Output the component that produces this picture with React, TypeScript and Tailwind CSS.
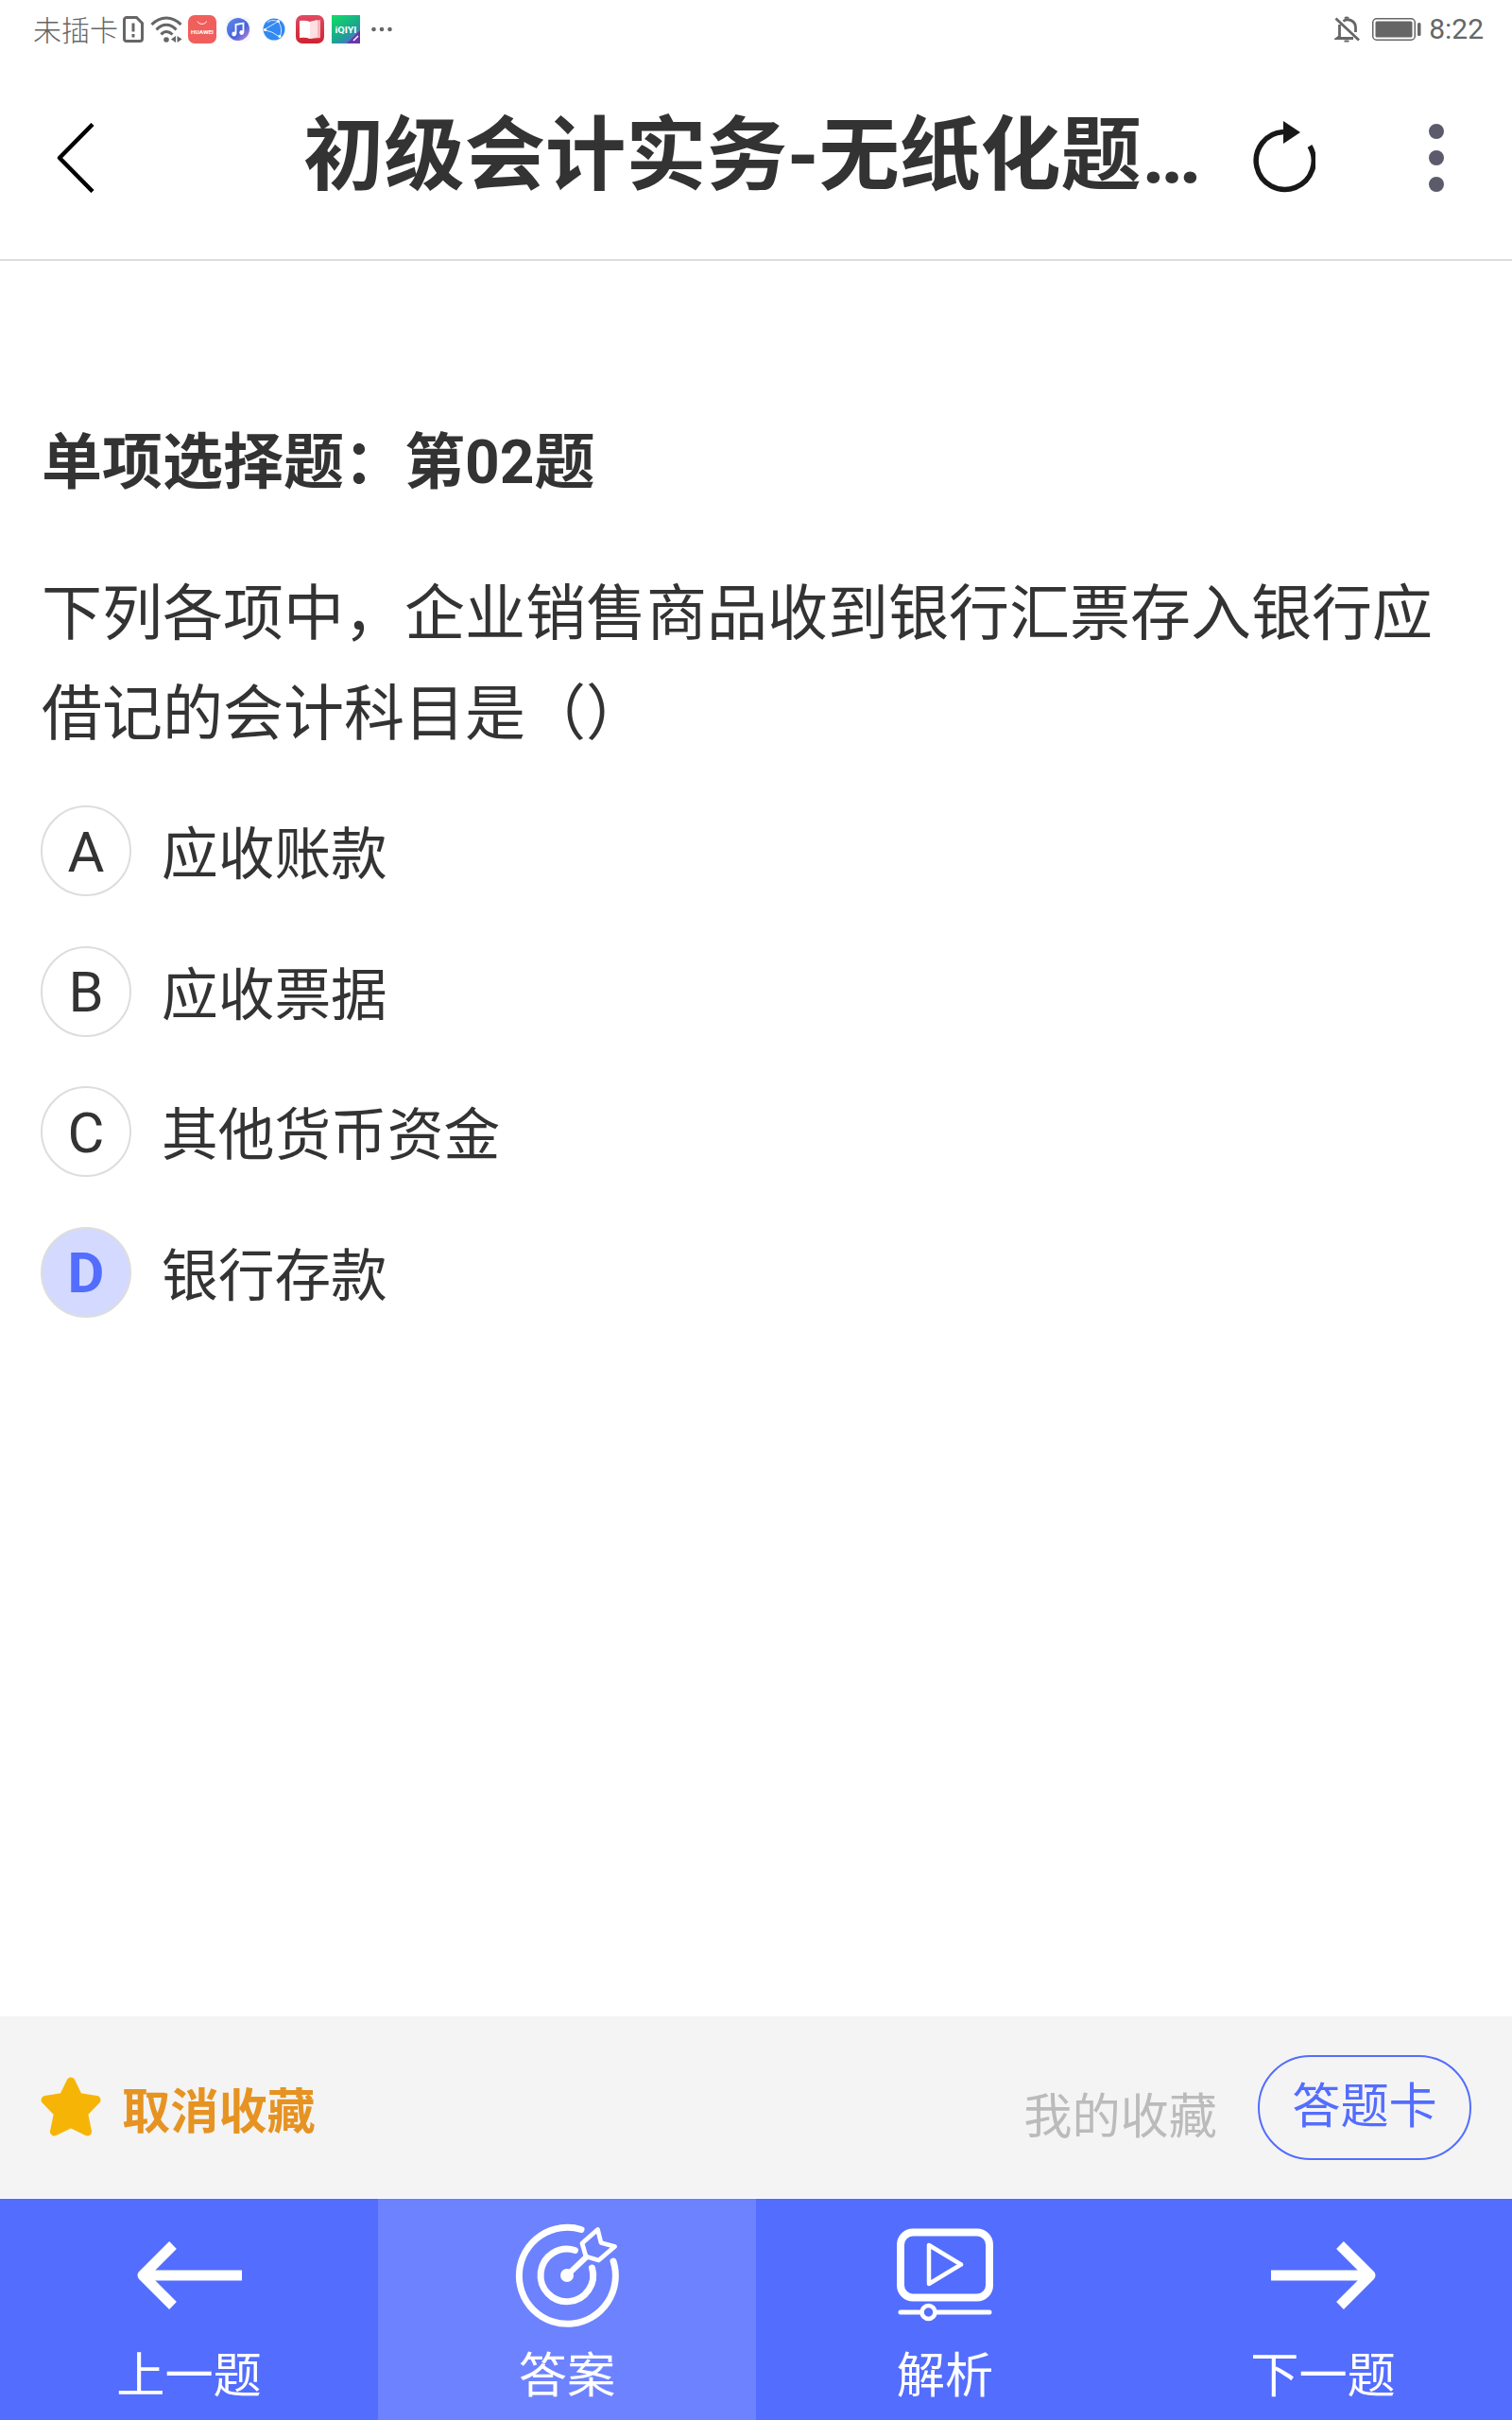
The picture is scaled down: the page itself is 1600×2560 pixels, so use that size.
const options = [
  { key: "A", text: "应收账款" },
  { key: "B", text: "应收票据" },
  { key: "C", text: "其他货币资金" },
  { key: "D", text: "银行存款", selected: true },
];

function StatusBar() {
  return (
    <div className="flex h-[62px] items-center justify-between pb-px pl-[35px] pr-[30px] text-[#666]">
      <div className="flex items-center">
        <span className="pb-0.5 font-['Noto_Sans_CJK_SC',sans-serif] text-[30px] leading-none font-light">
          未插卡
        </span>
        <svg width="22" height="28" viewBox="0 0 22 28" className="ml-[5px]" fill="none" stroke="#666" strokeWidth="3">
          <path d="M4 1.5h10.500L20.500 7.500V24a2.500 2.500 0 0 1-2.500 2.500H4A2.500 2.500 0 0 1 1.500 24V4A2.500 2.500 0 0 1 4 1.500z" />
          <path d="M11 7.500v9M11 19v3.500" />
        </svg>
        <svg width="34" height="28" viewBox="0 0 34 28" className="ml-[7px]" fill="none" stroke="#666" strokeWidth="3">
          <path d="M1.500 9C10.500-.5 23.500-.5 32.500 9M6.500 14.500c6-7 15-7 21 0M11.500 19.500c3-4 8-4 12 0" />
          <circle cx="17" cy="25" r="2.800" fill="#666" stroke="none" />
          <path d="M27 21v7l-5-3.500zM28.500 21v7l5-3.500z" fill="#666" stroke="none" />
        </svg>
        {/* Running app icons */}
        <svg width="30" height="30" viewBox="0 0 30 30" className="ml-[6px]">
          <rect width="30" height="30" rx="7" fill="#f05f5b" />
          <path d="M10 6.500c1 3.800 8.500 3.800 9.500 0" fill="none" stroke="#fff" strokeWidth="1" />
          <text x="15" y="19.500" textAnchor="middle" textLength="24" lengthAdjust="spacingAndGlyphs" fill="#fff" fontFamily="Roboto, sans-serif" fontWeight="700" fontSize="5.500">
            HUAWEI
          </text>
        </svg>
        <svg width="26" height="26" viewBox="0 0 26 26" className="ml-[10px]">
          <defs>
            <linearGradient id="music" x1="0" y1="0" x2="1" y2="1">
              <stop offset="0" stopColor="#5b8def" />
              <stop offset="0.600" stopColor="#4a62d8" />
              <stop offset="1" stopColor="#d58be0" />
            </linearGradient>
          </defs>
          <rect width="26" height="26" rx="6" fill="#f7f7fb" />
          <circle cx="13" cy="13" r="12" fill="url(#music)" />
          <path d="M10.500 18V8l8-1.500v10" fill="none" stroke="#fff" strokeWidth="1.800" />
          <circle cx="8.700" cy="18" r="2.400" fill="#fff" />
          <circle cx="16.700" cy="16.500" r="2.400" fill="#fff" />
        </svg>
        <svg width="24" height="24" viewBox="0 0 24 24" className="ml-[13px]">
          <circle cx="12" cy="12" r="11.500" fill="#3388f2" />
          <path d="M1.500 12.500 16.500 3.500q5 8 2 15.500M1.500 12.500Q10 14 18 20M16.500 3.500Q8 1 5 5" fill="none" stroke="#d5e8ff" strokeWidth="1" />
          <circle cx="16.500" cy="3.500" r="1.500" fill="#fff" />
          <circle cx="18" cy="19.500" r="1.500" fill="#fff" />
          <circle cx="2.500" cy="12.500" r="1.500" fill="#fff" />
        </svg>
        <svg width="30" height="30" viewBox="0 0 30 30" className="ml-[11px]">
          <defs>
            <linearGradient id="book" x1="0" y1="0" x2="0" y2="1">
              <stop offset="0" stopColor="#e14b63" />
              <stop offset="1" stopColor="#d0222f" />
            </linearGradient>
          </defs>
          <rect width="30" height="30" rx="7" fill="url(#book)" />
          <path d="m15 7 11-2v19l-11 1z" fill="#f9b4bc" />
          <path d="M4 6q6-1 11 1v18q-5-2-11-1z" fill="#fff" />
          <path d="m15 7 8-2v18l-8 2z" fill="#fde0e4" />
        </svg>
        <svg width="30" height="30" viewBox="0 0 30 30" className="ml-2">
          <defs>
            <linearGradient id="iqiyi" x1="0.200" y1="0" x2="0.900" y2="1">
              <stop offset="0" stopColor="#12d66b" />
              <stop offset="0.550" stopColor="#1ba58e" />
              <stop offset="1" stopColor="#5a63e0" />
            </linearGradient>
          </defs>
          <path d="M0 0h30v30H0z" fill="url(#iqiyi)" />
          <path d="M30 16v14H16z" fill="#6a35a8" />
          <path d="m23 27 5-5" stroke="#fff" strokeWidth="1.500" />
          <text x="15" y="18.500" textAnchor="middle" textLength="23" lengthAdjust="spacingAndGlyphs" fill="#fff" fontFamily="Roboto, sans-serif" fontWeight="700" fontSize="9">
            iQIYI
          </text>
        </svg>
        <svg width="22" height="6" viewBox="0 0 22 6" className="ml-3" fill="#666">
          <circle cx="2.500" cy="3" r="2.300" />
          <circle cx="11" cy="3" r="2.300" />
          <circle cx="19.500" cy="3" r="2.300" />
        </svg>
      </div>
      <div className="flex items-center">
        <svg width="28" height="28" viewBox="0 0 28 28" fill="none" stroke="#666" strokeWidth="2.800">
          <path d="M5.500 9v12.500L3 23.500h17M9.500 5.500C14 1.500 22.500 5 22.500 12v5" />
          <path d="M1.500 2.500 26 25.500" />
          <path d="M11 2.500a2.500 2.500 0 0 1 4 0M10.500 26.500h5" strokeWidth="2" />
        </svg>
        <svg width="52" height="24" viewBox="0 0 52 24" className="ml-[12px]">
          <rect x="0.750" y="0.750" width="44.500" height="22.500" rx="4" fill="none" stroke="#666" strokeWidth="1.500" />
          <rect x="3.500" y="3.500" width="39" height="17" rx="1.500" fill="#666" />
          <rect x="48" y="5" width="3.500" height="14" rx="1.500" fill="#666" />
        </svg>
        <span className="ml-[8px] font-[Roboto,sans-serif] text-[30px] leading-none">8:22</span>
      </div>
    </div>
  );
}

function Header() {
  return (
    <header className="flex h-[214px] items-start border-b-2 border-[#ddd]">
      <svg width="40" height="74" viewBox="0 0 40 74" className="mt-[68px] ml-[60px]" fill="none" stroke="#000" strokeWidth="4.500">
        <path d="M38 1.500 3 37l35 35.500" strokeLinejoin="round" />
      </svg>
      <h1 className="mt-[39px] ml-[221px] w-[950px] text-[85.33px] leading-[128px] font-bold whitespace-nowrap">
        初级会计实务-无纸化题…
      </h1>
      <svg width="70" height="80" viewBox="0 0 70 80" className="mt-[64px] ml-[51px]">
        <path d="M64 28.500A30.500 30.500 0 1 1 36 13.500" fill="none" stroke="#181818" strokeWidth="5.500" />
        <path d="M36 2v24l18-12z" fill="#181818" />
      </svg>
      <div className="mt-[69px] ml-[120px] flex flex-col gap-3">
        <span className="size-4 rounded-full bg-[#5c5b6b]" />
        <span className="size-4 rounded-full bg-[#5c5b6b]" />
        <span className="size-4 rounded-full bg-[#5c5b6b]" />
      </div>
    </header>
  );
}

function TargetIcon() {
  return (
    <svg width="112" height="112" viewBox="0 0 112 112" className="mb-px" fill="none" stroke="#fff" strokeWidth="7" strokeLinecap="round" strokeLinejoin="round">
      <path d="M71 7.500A51 51 0 1 0 105 41" />
      <path d="M64.500 29.500A27.800 27.800 0 1 0 82.500 48" />
      <circle cx="56" cy="56" r="7" fill="#fff" stroke="none" />
      <path d="M56 56 76.500 36.500" strokeWidth="6" />
      <path d="M76 36 72 22 88.500 7.500 92 21.500l14.500 4L89.500 40z" strokeWidth="4.800" />
    </svg>
  );
}

function VideoIcon() {
  return (
    <svg width="104" height="100" viewBox="0 0 104 100" fill="none" stroke="#fff">
      <rect x="5" y="4.500" width="94" height="69" rx="13" strokeWidth="8" />
      <path d="M35 18v41l34-20.500z" strokeWidth="4.500" strokeLinejoin="round" />
      <path d="M5 89h22M43 89h56" strokeWidth="5" strokeLinecap="round" />
      <circle cx="34.500" cy="89" r="7" strokeWidth="4.500" />
    </svg>
  );
}

function ArrowIcon({ flip }: { flip?: boolean }) {
  return (
    <svg width="112" height="72" viewBox="0 0 112 72" className={flip ? "ml-0.5 -scale-x-100" : ""} fill="none" stroke="#fff" strokeWidth="11">
      <path d="M112 36H10" />
      <path d="M39 4 7 36l32 32" strokeLinejoin="round" />
    </svg>
  );
}

const tabs = [
  { label: "上一题", icon: <ArrowIcon /> },
  { label: "答案", icon: <TargetIcon />, active: true },
  { label: "解析", icon: <VideoIcon /> },
  { label: "下一题", icon: <ArrowIcon flip /> },
];

export default function App() {
  return (
    <div className="flex h-[2560px] w-[1600px] flex-col overflow-hidden bg-white font-[Roboto,'Noto_Sans_CJK_SC',sans-serif] text-[#333]">
      <StatusBar />
      <Header />

      {/* Question */}
      <main className="flex-1 px-[43px] pt-[161px]">
        <h2 className="ml-px text-[64px] leading-[106px] font-bold">单项选择题：第02题</h2>
        <p className="mt-[54px] ml-px text-[64px] leading-[106px]">
          下列各项中，企业销售商品收到银行汇票存入银行应借记的会计科目是（）
        </p>
        <ul className="mt-[43px] flex flex-col gap-[52.6px]">
          {options.map((o) => (
            <li key={o.key} className="flex h-24 items-center text-[59.7px] leading-none">
              <span
                className={`flex size-24 items-center justify-center rounded-full border-2 border-[#ddd] pt-[5px] ${
                  o.selected ? "bg-[#d4daff] font-bold text-[#536dfe]" : ""
                }`}
              >
                {o.key}
              </span>
              <span className="ml-8 pt-[12px]">{o.text}</span>
            </li>
          ))}
        </ul>
      </main>

      {/* Favorites */}
      <section className="flex h-[192px] items-center bg-[#f4f4f4] px-[43px] text-[51.2px] leading-none">
        <svg width="64" height="64" viewBox="0 0 64 64">
          <path
            d="M32 5 40 21.500 59 24.500 45.500 38.500 49.500 58 32 49.500 14.500 58 18.500 38.500 5 24.500 24 21.500z"
            fill="#f6b506"
            stroke="#f6b506"
            strokeWidth="9"
            strokeLinejoin="round"
          />
        </svg>
        <span className="mt-[11px] ml-[22px] font-bold text-[#e69322]">取消收藏</span>
        <span className="mt-[22px] ml-auto text-[#bbb]">我的收藏</span>
        <button className="ml-[43px] h-[111px] w-[226px] rounded-full border-2 border-[#536dfe] text-[#536dfe]">
          答题卡
        </button>
      </section>

      {/* Bottom actions */}
      <nav className="mt-px grid h-[234px] grid-cols-4 bg-[#536dfe] text-[51.2px] leading-none text-white">
        {tabs.map((t) => (
          <button key={t.label} className={`flex flex-col items-center ${t.active ? "bg-[#6d82ff]" : ""}`}>
            <span className="mt-6 flex h-[114px] items-center">{t.icon}</span>
            <span className="mt-6">{t.label}</span>
          </button>
        ))}
      </nav>
    </div>
  );
}
